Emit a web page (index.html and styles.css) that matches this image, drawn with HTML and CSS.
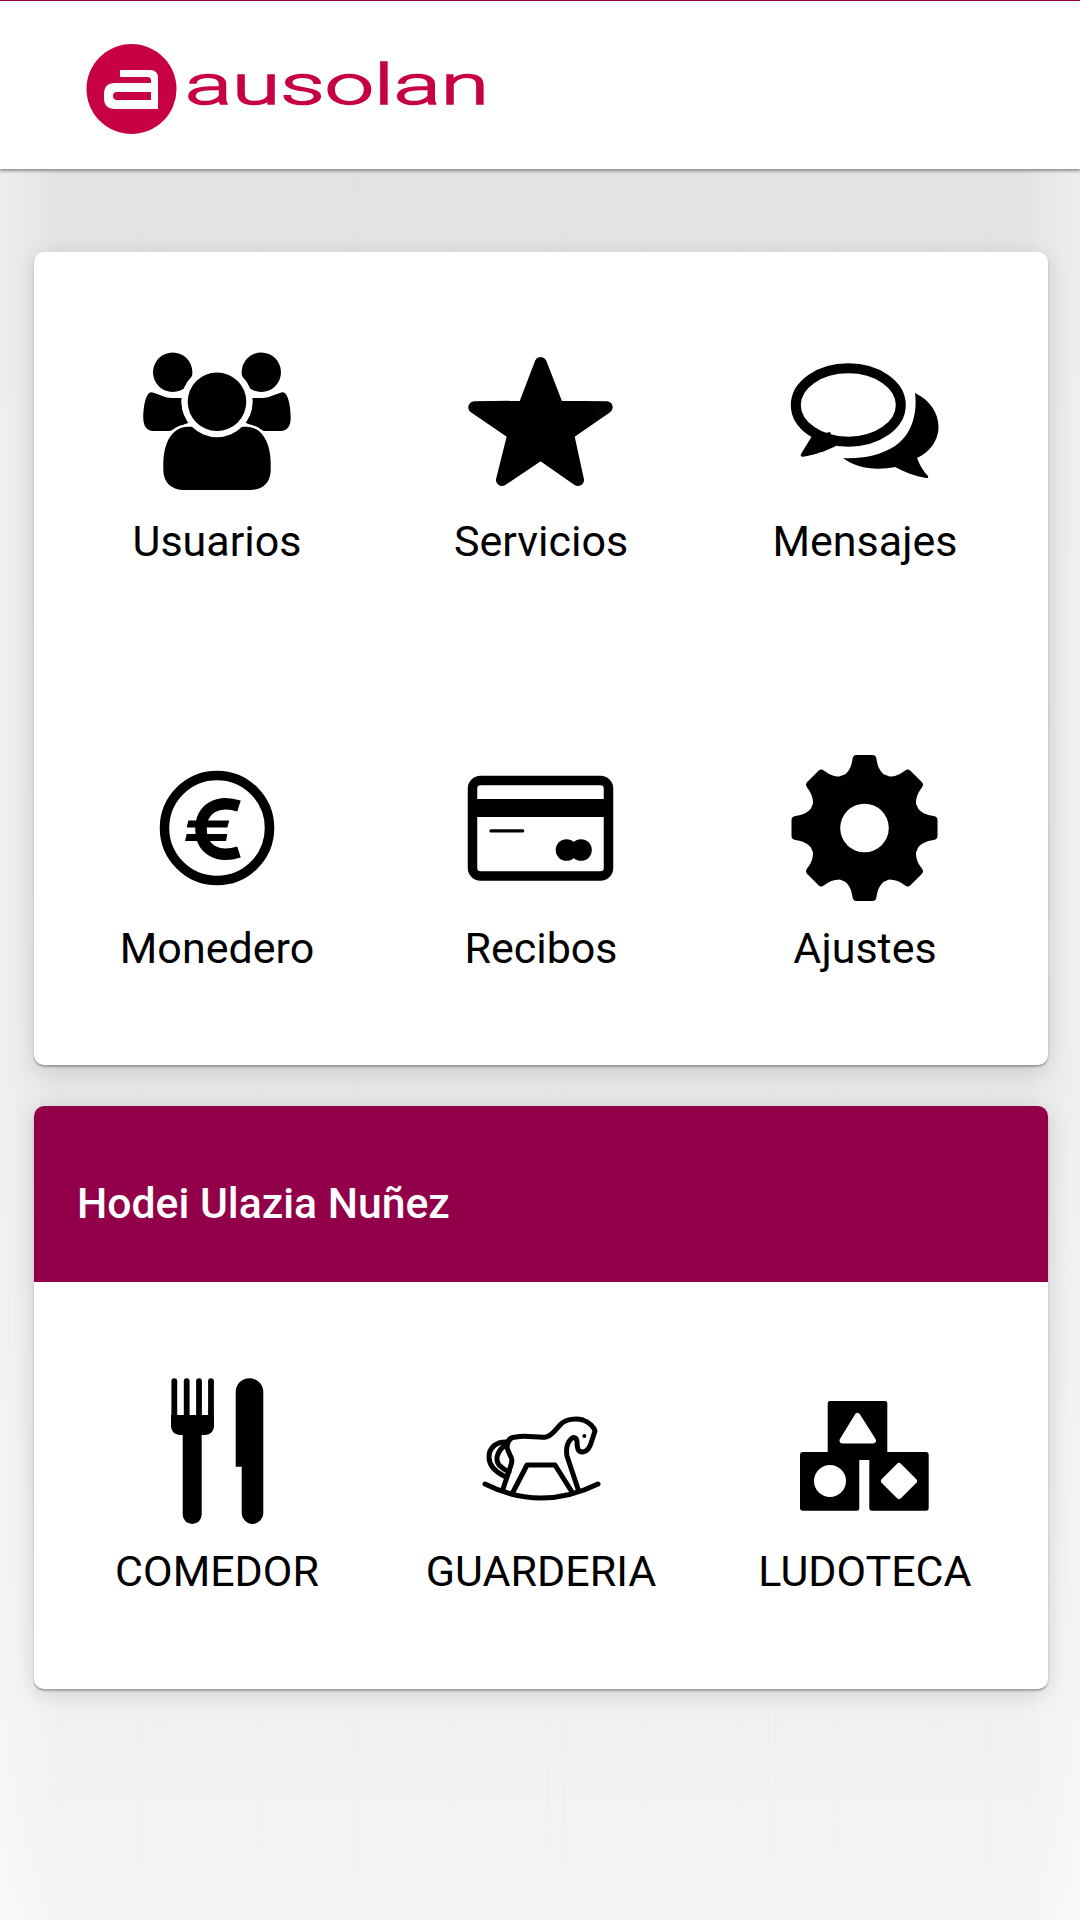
FILE: index.html
```html
<!DOCTYPE html>
<html lang="es">
<head>
    <meta charset="UTF-8">
    <meta name="viewport" content="width=device-width, initial-scale=1.0">
    <title>Ausolan</title>
    <link rel="stylesheet" href="styles.css">
</head>
<body>

    <header class="top-bar">
        <svg class="logo" viewBox="0 0 420 100" role="img" aria-label="ausolan">
            <circle class="logo-fill" cx="47.5" cy="45" r="45"/>
            <path class="logo-mark" fill-rule="evenodd" d="M36 26H66Q74 26 74 34V65H31Q20 65 20 54V50Q20 39 31 39H67V36Q67 33 63 33H36ZM33 48Q29 48 29 52Q29 56 33 56H67V48Z"/>
            <text class="logo-word" x="101" y="60" textLength="304" lengthAdjust="spacingAndGlyphs">ausolan</text>
        </svg>
    </header>

    <main class="content">

        <section class="card">
            <div class="tile-grid">
                <a class="tile" href="#">
                    <svg class="icon" viewBox="0 0 150 150">
                        <circle cx="30.7" cy="26.3" r="19.7"/>
                        <circle cx="119.3" cy="26.3" r="19.7"/>
                        <path d="M9.7 46.3C14 47 22 52 30 52C34 52 38 52 42 52L48 76L28 85H11C5 85 1.3 80 1.3 72C1.3 60 4 46 9.7 46.3Z"/>
                        <path d="M140.3 46.3C136 47 128 52 120 52C116 52 112 52 108 52L102 76L122 85H139C145 85 148.7 80 148.7 72C148.7 60 146 46 140.3 46.3Z"/>
                        <circle class="cut" cx="75" cy="55.7" r="35.5"/>
                        <path class="cut-edge" d="M21.3 118C21.3 100 28 81 46 80.7H104C122 81 128.7 100 128.7 118V124C128.7 137 120 144 108 144H42C30 144 21.3 137 21.3 124Z"/>
                        <circle class="cut" cx="75" cy="55.7" r="35.5"/>
                        <circle cx="75" cy="55.7" r="29.3"/>
                    </svg>
                    <span class="tile-label">Usuarios</span>
                </a>
                <a class="tile" href="#">
                    <svg class="icon" viewBox="0 0 150 150">
                        <polygon class="round-fill" points="74.7,17 91.7,60.7 140.7,61.3 102,88 112,134 74.7,108 36,134 47.5,88 8.3,61.3 58,60.7"/>
                    </svg>
                    <span class="tile-label">Servicios</span>
                </a>
                <a class="tile" href="#">
                    <svg class="icon" viewBox="0 0 150 150">
                        <ellipse class="line" cx="58.3" cy="59" rx="52.5" ry="36.7" stroke-width="10"/>
                        <path d="M22 90L11 108Q10 111 13 110.7C24 109 36 105 46 100L40 86Z"/>
                        <path d="M125 47C140 54 148.5 67 148.5 81C148.5 94 140 106 127 112C130 120 134 126 138 130Q139 132.5 136 132C125 130 114 126 105 121C85 125 66 122 53 112C70 113 90 110 105 100C120 90 128 70 125 47Z"/>
                    </svg>
                    <span class="tile-label">Mensajes</span>
                </a>
                <a class="tile" href="#">
                    <svg class="icon" viewBox="0 0 150 150">
                        <circle class="line" cx="75" cy="75" r="52.5" stroke-width="9.5"/>
                        <path class="line-butt" stroke-width="11.5" d="M97 53C75 46 59 56 59 76C59 96 75 106 97 99"/>
                        <polygon points="46.3,67.5 87.3,67.5 85.3,74.5 44.7,74.5"/>
                        <polygon points="44.7,81 85.3,81 84,88 43,88"/>
                    </svg>
                    <span class="tile-label">Monedero</span>
                </a>
                <a class="tile" href="#">
                    <svg class="icon" viewBox="0 0 150 150">
                        <rect class="line" x="6.5" y="27.5" width="136" height="95.5" rx="8" stroke-width="9.5"/>
                        <rect x="2" y="46" width="145" height="18"/>
                        <rect x="23.3" y="76.3" width="35" height="3.2" rx="1.6"/>
                        <circle cx="100.5" cy="97" r="10.8"/>
                        <circle cx="115" cy="97" r="10.8"/>
                    </svg>
                    <span class="tile-label">Recibos</span>
                </a>
                <a class="tile" href="#">
                    <svg class="icon" viewBox="0 0 150 150">
                        <g transform="translate(74.5 75)">
                            <circle r="57"/>
                            <path id="gear-tooth" d="M-21-52C-15-57-13-62-12-69Q-11.5-73-8-73H8Q11.5-73 12-69C13-62 15-57 21-52Z"/>
                            <use href="#gear-tooth" transform="rotate(45)"/>
                            <use href="#gear-tooth" transform="rotate(90)"/>
                            <use href="#gear-tooth" transform="rotate(135)"/>
                            <use href="#gear-tooth" transform="rotate(180)"/>
                            <use href="#gear-tooth" transform="rotate(225)"/>
                            <use href="#gear-tooth" transform="rotate(270)"/>
                            <use href="#gear-tooth" transform="rotate(315)"/>
                            <circle class="cut" r="24.3"/>
                        </g>
                    </svg>
                    <span class="tile-label">Ajustes</span>
                </a>
            </div>
        </section>

        <section class="card">
            <h2 class="card-title">Hodei Ulazia Nuñez</h2>
            <div class="tile-grid">
                <a class="tile" href="#">
                    <svg class="icon" viewBox="0 0 150 150">
                        <rect x="29.4" y="2.3" width="5.8" height="42" rx="2.9"/>
                        <rect x="41.8" y="2.3" width="5.8" height="42" rx="2.9"/>
                        <rect x="54.1" y="2.3" width="5.8" height="42" rx="2.9"/>
                        <rect x="66.1" y="2.3" width="5.8" height="42" rx="2.9"/>
                        <path d="M29 39H72V50C72 55 68 59 63 59H38C33 59 29 55 29 50Z"/>
                        <rect x="40.7" y="50" width="19" height="98" rx="9.5"/>
                        <path d="M93.7 90.7V16C93.7 8 100 2.3 107.5 2.3C115 2.3 121.3 8 121.3 16V137C121.3 143 116 148 110.5 148C105 148 99.7 143 99.7 137V90.7Z"/>
                    </svg>
                    <span class="tile-label">COMEDOR</span>
                </a>
                <a class="tile" href="#">
                    <svg class="icon" viewBox="0 0 150 150">
                        <g class="line" stroke-width="5">
                            <path d="M19 108Q75 136 132 108"/>
                            <path d="M37 113L44 92C46 86 47 84 44 79L41 72C41 65 44 61 50 61C60 59 72 62 80 61C86 60 90 53 95 48C100 43 110 42 117 44C123 46 128 51 129 55L126 64C124 72 120 76 116 76C112 76 111 72 111 66C111 62 108 60 105 63C101 67 100 74 101 80L112 113"/>
                            <path d="M46 118L61 89H89L106 116"/>
                            <path d="M42 66C30 65 23 72 23 81C23 90 30 96 38 100"/>
                            <path d="M38 70C31 76 29 84 33 89C36 92 39 94 43 96"/>
                        </g>
                        <circle cx="118.3" cy="60" r="2"/>
                    </svg>
                    <span class="tile-label">GUARDERIA</span>
                </a>
                <a class="tile" href="#">
                    <svg class="icon" viewBox="0 0 150 150">
                        <path d="M40 25H95Q97.3 25 97.3 27V76H136Q138.7 76 138.7 79V132Q138.7 134.7 136 134.7H82Q79.3 134.7 79.3 132V84H69.3V132Q69.3 134.7 67 134.7H13Q10 134.7 10 132V79Q10 76 13 76H37.7V27Q37.7 25 40 25Z"/>
                        <polygon class="round-cut" points="67.5,40 83,64.5 52.5,64.5"/>
                        <circle class="cut" cx="40" cy="105" r="16"/>
                        <polygon class="round-cut" points="109,90 124,105 109,120 94,105"/>
                    </svg>
                    <span class="tile-label">LUDOTECA</span>
                </a>
            </div>
        </section>

    </main>

</body>
</html>
```

FILE: styles.css
```css
html, body {
    margin: 0;
    height: 100%;
}
body {
    width: 1080px;
    height: 1920px;
    overflow: hidden;
    font-family: Roboto, "Liberation Sans", sans-serif;
    color: #000;
    background-color: #ececec;
    background-image:
        linear-gradient(90deg, rgba(255,255,255,.4), rgba(255,255,255,0) 60px, rgba(255,255,255,0) 1020px, rgba(255,255,255,.4)),
        repeating-linear-gradient(90deg, rgba(0,0,0,0) 0 61px, rgba(0,0,0,.006) 63px, rgba(0,0,0,0) 65px 97px),
        repeating-linear-gradient(90deg, rgba(0,0,0,0) 0 139px, rgba(0,0,0,.008) 142px, rgba(0,0,0,0) 145px 211px),
        linear-gradient(180deg, #e3e3e3 170px, #e6e6e6 1100px, #f0f0f0 1700px, #f5f5f5 1920px);
}

.top-bar {
    height: 169px;
    box-sizing: border-box;
    padding: 43px 0 0 84px;
    background: #fff;
    border-top: 1px solid #96004a;
    box-shadow: 0 2px 3px rgba(0,0,0,.4);
}
.logo {
    display: block;
    width: 420px;
    height: 100px;
}
.logo-fill {
    fill: #c60043;
}
.logo-mark {
    fill: #fff;
}
.logo-word {
    fill: #c60043;
    stroke: #c60043;
    stroke-width: 1.5;
    font-family: Roboto, sans-serif;
    font-weight: 300;
    font-size: 56px;
}

.content {
    padding: 83px 32px 0 34px;
}
.card {
    margin-bottom: 41px;
    background: #fff;
    border-radius: 10px;
    overflow: hidden;
    box-shadow: 0 2px 2px rgba(0,0,0,.28), 0 5px 22px rgba(0,0,0,.13);
}
.card-title {
    margin: 0;
    height: 176px;
    box-sizing: border-box;
    padding: 74px 0 0 43px;
    background: #93004a;
    color: #fff;
    font-size: 42.7px;
    line-height: 47px;
    font-weight: 500;
}

.tile-grid {
    display: grid;
    grid-template-columns: repeat(3, 1fr);
    padding: 0 21px;
}
.tile {
    display: flex;
    flex-direction: column;
    align-items: center;
    height: 406.5px;
    box-sizing: border-box;
    padding-top: 94px;
    color: #000;
    text-decoration: none;
}
.icon {
    display: block;
    width: 150px;
    height: 150px;
    flex: none;
}
.tile-label {
    margin-top: 20px;
    font-size: 43px;
    line-height: 50px;
}

.cut {
    fill: #fff;
}
.cut-edge {
    stroke: #fff;
    stroke-width: 5;
    paint-order: stroke;
}
.line {
    fill: none;
    stroke: #000;
    stroke-linecap: round;
    stroke-linejoin: round;
}
.line-butt {
    fill: none;
    stroke: #000;
}
.round-fill {
    stroke: #000;
    stroke-width: 12;
    stroke-linejoin: round;
}
.round-cut {
    fill: #fff;
    stroke: #fff;
    stroke-width: 6;
    stroke-linejoin: round;
}
```
